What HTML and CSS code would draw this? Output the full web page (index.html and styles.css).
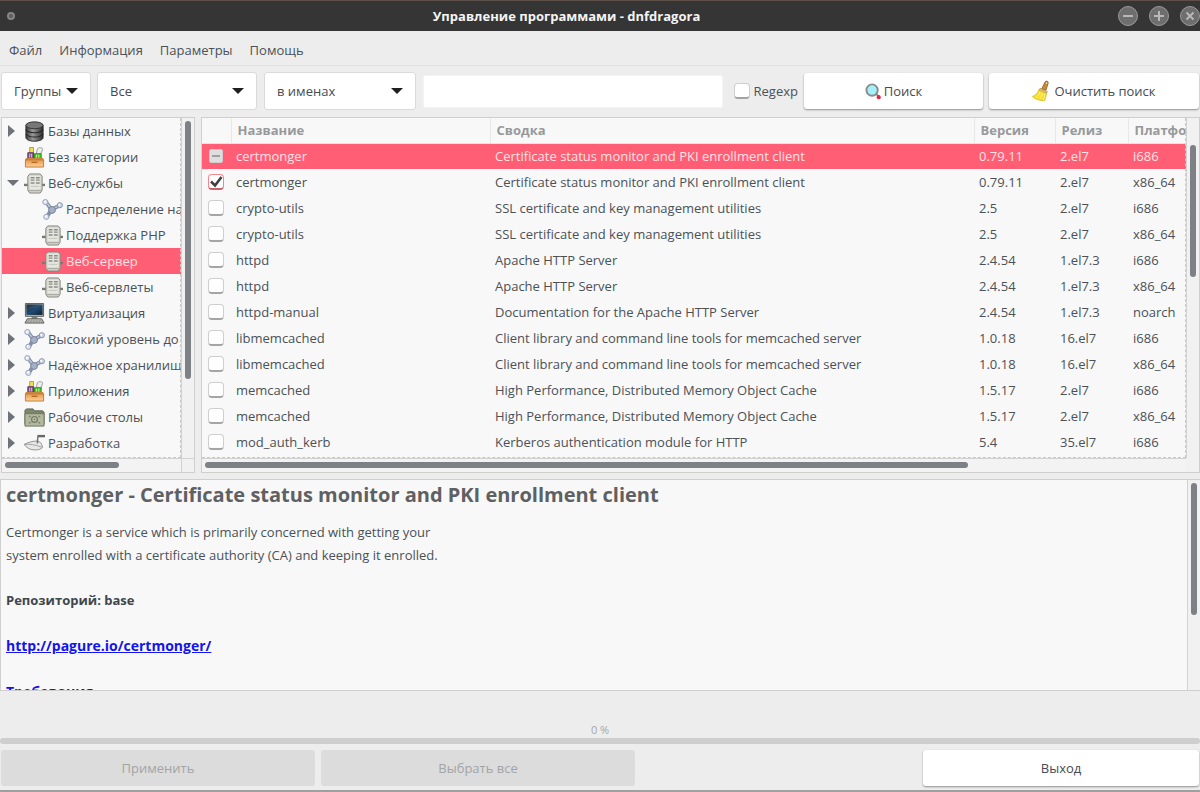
FILE: index.html
```
<!DOCTYPE html>
<html lang="ru">
<head>
<meta charset="utf-8">
<title>Управление программами - dnfdragora</title>
<link rel="stylesheet" href="styles.css">
</head>
<body>
<svg class="defs" aria-hidden="true">
  <defs>
    <linearGradient id="g-dark" x1="0" x2="1"><stop offset="0" stop-color="#3a3a3a"/><stop offset=".4" stop-color="#9a9a9a"/><stop offset="1" stop-color="#2c2c2c"/></linearGradient>
    <linearGradient id="g-screen" x1="0" y1="0" x2="1" y2="1"><stop offset="0" stop-color="#0c1c2c"/><stop offset=".5" stop-color="#1f4c74"/><stop offset="1" stop-color="#10202f"/></linearGradient>
    <linearGradient id="g-box" x1="0" y1="0" x2="0" y2="1"><stop offset="0" stop-color="#e59a50"/><stop offset="1" stop-color="#fdd09a"/></linearGradient>
    <symbol id="i-db" viewBox="0 0 22 22">
      <path d="M2 4.500v13c0 2 4 3.700 9 3.700s9-1.700 9-3.700v-13z" fill="url(#g-dark)" stroke="#2e2e2e"/>
      <ellipse cx="11" cy="4.500" rx="9" ry="3.600" fill="#777" stroke="#333"/>
      <path d="M2 9c1 2.200 4.500 3.300 9 3.300s8-1.100 9-3.300M2 13.500c1 2.200 4.500 3.300 9 3.300s8-1.100 9-3.300" fill="none" stroke="#242424" stroke-width="1.200"/>
    </symbol>
    <symbol id="i-apps" viewBox="0 0 22 22">
      <path d="M6 .5h4v6H6z" fill="#f3df55" stroke="#c09a20"/>
      <path d="M4 6h6v6H4z" fill="#87528e" stroke="#5c3566"/><path d="M6 7v4M8 7v4" stroke="#d9bfe0"/>
      <path d="M14 2c1-2 6-1.500 5.500.5L17 9h-4.500z" fill="#eee" stroke="#999"/>
      <path d="M11 7h7v6h-7z" fill="#43c51c" stroke="#2a9608"/><path d="M13 8v3M15.500 8v3" stroke="#c6f7b3"/>
      <path d="M2 11.500h18l1 3H1z" fill="#c9853f"/>
      <path d="M1.500 13.500h19v7.500h-19z" fill="url(#g-box)" stroke="#c27c36"/>
      <path d="M8 16h6" stroke="#b56c24" stroke-width="1.500"/>
    </symbol>
    <symbol id="i-server" viewBox="0 0 22 22">
      <path d="M0 12.500h22" stroke="#777973" stroke-width="2.500"/>
      <path d="M4 3.500 6 1h11l2 2.500V18l-2 3H6l-2-3z" fill="#d6d7cf" stroke="#82847c"/>
      <path d="M6 3h11v14H6z" fill="#e6e7e1"/>
      <path d="M7 5h4M12.500 5h4M7 7.500h4M12.500 7.500h4M7 10.500h4M12.500 10.500h4" stroke="#8a8c85" stroke-width="1.400"/>
      <path d="M7 14h9" stroke="#c2c3bb"/><path d="M5 18.500h13" stroke="#a2a49b"/>
    </symbol>
    <symbol id="i-net" viewBox="0 0 22 22">
      <path d="M4 3l6 8M10 11l8-4M10 11l-5 8" stroke="#8390a8" stroke-width="4"/>
      <path d="M5 4l5 7M10 11l8-4" stroke="#c4cede" stroke-width="1.400"/>
      <circle cx="10.500" cy="11.500" r="3.600" fill="#a3b0c6" stroke="#77849c"/>
      <circle cx="3.500" cy="3.200" r="2.700" fill="#e0e7f2" stroke="#93a0b8"/>
      <circle cx="18.700" cy="6.500" r="2.700" fill="#cdd7e8" stroke="#8491ab"/>
      <circle cx="4.500" cy="18.700" r="2.700" fill="#dbe4f2" stroke="#93a0b8"/>
      <circle cx="3" cy="3" r="1" fill="#fff"/><circle cx="4" cy="18" r="1" fill="#fff"/><circle cx="18" cy="6" r="1" fill="#fff"/>
    </symbol>
    <symbol id="i-pc" viewBox="0 0 22 22">
      <path d="M1.500.5h19v13.500h-19z" fill="#b5b6b0" stroke="#5b5d58"/>
      <path d="M2.500 1.500h17v11h-17z" fill="url(#g-screen)"/><path d="M3 2h16L3 8z" fill="#fff" opacity=".08"/>
      <path d="M8 14h6v2.500H8z" fill="#777973"/>
      <path d="M3.500 16.500h15l2.500 4.500H1z" fill="#c6c8c0" stroke="#555753"/><path d="M4 18h14M3 19.700h16" stroke="#80827c" stroke-dasharray="2 1"/>
    </symbol>
    <symbol id="i-folder" viewBox="0 0 22 22">
      <path d="M1 18V3.500L2.500 2h7L11 4h8.500L21 5.500V18z" fill="#7f866e" stroke="#5f6651"/>
      <path d="M1 7h20v13H1z" fill="#b3b99f" stroke="#6d745c"/>
      <circle cx="11" cy="13" r="3" fill="#c3c8b2" stroke="#737b61" stroke-width="1.400"/>
      <circle cx="11" cy="13" r="1" fill="#737b61"/>
      <path d="M5 10h2M15 10h2M5 16.500h2M15 16.500h2" stroke="#7d846b" stroke-width="1.500"/>
    </symbol>
    <symbol id="i-dev" viewBox="0 0 22 22">
      <path d="M0 12C4 10 10 8 14.500 8.500c3 .5 4.500 4 5 6.500-3 4-12 3-15 1C2.500 14.500 1 13.500 0 12z" fill="#e6e7e6" stroke="#8e908e"/>
      <path d="M1 12c5-.5 10 0 18 3" fill="none" stroke="#a0a2a0"/>
      <path d="M14.500 4 14 11" stroke="#707270" stroke-width="1.500"/>
      <path d="M14 2h8v2.500h-8z" fill="#666866"/>
    </symbol>
    <symbol id="i-search" viewBox="0 0 18 18">
      <path d="M12 12l3.500 3" stroke="#8b8d8b" stroke-width="2"/>
      <circle cx="7.500" cy="7.500" r="6" fill="#a5f0fb" stroke="#898c8c" stroke-width="2"/>
      <circle cx="14.500" cy="15" r="2.200" fill="#f3203f"/>
    </symbol>
    <symbol id="i-broom" viewBox="0 0 20 24">
      <path d="M11 9.500 14.500 2c1-1.700 3.500-1.300 3.500 1L15.500 11z" fill="#c98b3c" stroke="#94601f"/>
      <circle cx="16.200" cy="3" r=".8" fill="#fff"/>
      <path d="M9 9l8 3.500-1 2.500L7.500 11z" fill="#d9b878" stroke="#a98645" stroke-width=".7"/>
      <path d="M7.500 11c-1.500 4-4 6-7 7 2.500 3 8 5 13.500 4.500 1-2.500 1.800-4.500 2-7.500z" fill="#f5de2c" stroke="#dfc22a"/>
      <path d="M9 13c-1 3-2.500 5-4.500 6.500M11.500 14c-.5 3-1.500 5-3 7M14 15c0 3-.5 5-1.500 7" fill="none" stroke="#fdf39a"/>
    </symbol>
  </defs>
</svg>

<header class="titlebar">
  <span class="dot"></span>
  <h1>Управление программами - dnfdragora</h1>
  <div class="winbtns">
    <button type="button" aria-label="Свернуть"><svg viewBox="0 0 20 20"><circle cx="10" cy="10" r="9.500"/><path d="M5 10h10"/></svg></button>
    <button type="button" aria-label="Развернуть"><svg viewBox="0 0 20 20"><circle cx="10" cy="10" r="9.500"/><path d="M5 10h10M10 5v10"/></svg></button>
    <button type="button" aria-label="Закрыть"><svg viewBox="0 0 20 20"><circle cx="10" cy="10" r="9.500"/><path d="M6.500 6.500l7 7M13.500 6.500l-7 7"/></svg></button>
  </div>
</header>

<nav class="menubar">
  <button type="button">Файл</button>
  <button type="button">Информация</button>
  <button type="button">Параметры</button>
  <button type="button">Помощь</button>
</nav>

<form class="toolbar">
  <span class="combo combo-view"><select aria-label="Вид"><option>Группы</option></select></span>
  <span class="combo combo-filter"><select aria-label="Фильтр"><option>Все</option></select></span>
  <span class="combo combo-scope"><select aria-label="Область поиска"><option>в именах</option></select></span>
  <input class="query" type="text" aria-label="Строка поиска">
  <label class="regexp"><input class="check" type="checkbox">Regexp</label>
  <button class="btn find" type="button"><svg class="ic-search"><use href="#i-search"/></svg>Поиск</button>
  <button class="btn clear" type="button"><svg class="ic-broom"><use href="#i-broom"/></svg>Очистить поиск</button>
</form>

<main>
  <section class="panes">
    <div class="pane tree-pane">
      <div class="view">
        <ul class="tree">
          <li><i class="arrow"></i><svg><use href="#i-db"/></svg><span>Базы данных</span></li>
          <li><i class="arrow none"></i><svg><use href="#i-apps"/></svg><span>Без категории</span></li>
          <li><i class="arrow open"></i><svg><use href="#i-server"/></svg><span>Веб-службы</span></li>
          <li class="child"><svg><use href="#i-net"/></svg><span>Распределение на</span></li>
          <li class="child"><svg><use href="#i-server"/></svg><span>Поддержка PHP</span></li>
          <li class="child selected"><svg><use href="#i-server"/></svg><span>Веб-сервер</span></li>
          <li class="child"><svg><use href="#i-server"/></svg><span>Веб-сервлеты</span></li>
          <li><i class="arrow"></i><svg><use href="#i-pc"/></svg><span>Виртуализация</span></li>
          <li><i class="arrow"></i><svg><use href="#i-net"/></svg><span>Высокий уровень до</span></li>
          <li><i class="arrow"></i><svg><use href="#i-net"/></svg><span>Надёжное хранилищ</span></li>
          <li><i class="arrow"></i><svg><use href="#i-apps"/></svg><span>Приложения</span></li>
          <li><i class="arrow"></i><svg><use href="#i-folder"/></svg><span>Рабочие столы</span></li>
          <li><i class="arrow"></i><svg><use href="#i-dev"/></svg><span>Разработка</span></li>
        </ul>
      </div>
      <div class="vbar"><div class="thumb tree-v"></div></div>
      <div class="hbar"><div class="thumb tree-h"></div></div>
      <div class="corner"></div>
    </div>

    <div class="pane list-pane">
      <div class="view">
        <table class="packages">
          <colgroup><col class="c-check"><col class="c-name"><col><col class="c-version"><col class="c-release"><col class="c-arch"></colgroup>
          <thead><tr><th></th><th>Название</th><th>Сводка</th><th>Версия</th><th>Релиз</th><th>Платформа</th></tr></thead>
          <tbody>
            <tr class="selected"><td><input class="check locked" type="checkbox" disabled aria-label="certmonger i686"></td><td>certmonger</td><td>Certificate status monitor and PKI enrollment client</td><td>0.79.11</td><td>2.el7</td><td>i686</td></tr>
            <tr><td><input class="check" type="checkbox" checked aria-label="certmonger x86_64"></td><td>certmonger</td><td>Certificate status monitor and PKI enrollment client</td><td>0.79.11</td><td>2.el7</td><td>x86_64</td></tr>
            <tr><td><input class="check" type="checkbox" aria-label="crypto-utils i686"></td><td>crypto-utils</td><td>SSL certificate and key management utilities</td><td>2.5</td><td>2.el7</td><td>i686</td></tr>
            <tr><td><input class="check" type="checkbox" aria-label="crypto-utils x86_64"></td><td>crypto-utils</td><td>SSL certificate and key management utilities</td><td>2.5</td><td>2.el7</td><td>x86_64</td></tr>
            <tr><td><input class="check" type="checkbox" aria-label="httpd i686"></td><td>httpd</td><td>Apache HTTP Server</td><td>2.4.54</td><td>1.el7.3</td><td>i686</td></tr>
            <tr><td><input class="check" type="checkbox" aria-label="httpd x86_64"></td><td>httpd</td><td>Apache HTTP Server</td><td>2.4.54</td><td>1.el7.3</td><td>x86_64</td></tr>
            <tr><td><input class="check" type="checkbox" aria-label="httpd-manual noarch"></td><td>httpd-manual</td><td>Documentation for the Apache HTTP Server</td><td>2.4.54</td><td>1.el7.3</td><td>noarch</td></tr>
            <tr><td><input class="check" type="checkbox" aria-label="libmemcached i686"></td><td>libmemcached</td><td>Client library and command line tools for memcached server</td><td>1.0.18</td><td>16.el7</td><td>i686</td></tr>
            <tr><td><input class="check" type="checkbox" aria-label="libmemcached x86_64"></td><td>libmemcached</td><td>Client library and command line tools for memcached server</td><td>1.0.18</td><td>16.el7</td><td>x86_64</td></tr>
            <tr><td><input class="check" type="checkbox" aria-label="memcached i686"></td><td>memcached</td><td>High Performance, Distributed Memory Object Cache</td><td>1.5.17</td><td>2.el7</td><td>i686</td></tr>
            <tr><td><input class="check" type="checkbox" aria-label="memcached x86_64"></td><td>memcached</td><td>High Performance, Distributed Memory Object Cache</td><td>1.5.17</td><td>2.el7</td><td>x86_64</td></tr>
            <tr><td><input class="check" type="checkbox" aria-label="mod_auth_kerb i686"></td><td>mod_auth_kerb</td><td>Kerberos authentication module for HTTP</td><td>5.4</td><td>35.el7</td><td>i686</td></tr>
          </tbody>
        </table>
      </div>
      <div class="vbar"><div class="thumb list-v"></div></div>
      <div class="hbar"><div class="thumb list-h"></div></div>
      <div class="corner"></div>
    </div>
  </section>

  <section class="details">
    <article>
      <h2>certmonger - Certificate status monitor and PKI enrollment client</h2>
      <p>Certmonger is a service which is primarily concerned with getting your<br>system enrolled with a certificate authority (CA) and keeping it enrolled.</p>
      <p><b>Репозиторий: base</b></p>
      <p><a href="#url">http://pagure.io/certmonger/</a></p>
      <p><a href="#requires">Требования</a></p>
    </article>
    <div class="vbar"><div class="thumb details-v"></div></div>
  </section>
</main>

<footer>
  <label class="status" for="progress">0 %</label>
  <progress id="progress" value="0" max="100"></progress>
  <div class="actions">
    <button class="btn" type="button" disabled>Применить</button>
    <button class="btn" type="button" disabled>Выбрать все</button>
    <span></span>
    <button class="btn" type="button">Выход</button>
  </div>
</footer>
</body>
</html>
```
FILE: styles.css
```
* { box-sizing: border-box; }

body {
  margin: 0;
  min-height: 100vh;
  display: flex;
  flex-direction: column;
  background: #ededed;
  color: #4b5157;
  font: 13px/18px "Open Sans", "Noto Sans", sans-serif;
  border-bottom: 2px solid #a0a0a0;
}

button, input, select { font: inherit; color: inherit; }
.defs { position: absolute; width: 0; height: 0; }

/* Title bar */
.titlebar {
  display: flex;
  align-items: center;
  height: 31px;
  padding-left: 7px;
  background: #353535;
  border-top: 1px solid #5b4f47;
  color: #f4f4f4;
}
.titlebar h1 { flex: 1; margin: 0; font-size: 13px; line-height: 18px; text-align: center; }
.dot { width: 8px; height: 8px; border: 2px solid #858585; border-radius: 50%; background: #5c5c5c; }
.winbtns { display: flex; gap: 11px; }
.winbtns button { width: 20px; height: 20px; padding: 0; border: 0; background: none; }
.winbtns svg { display: block; width: 20px; height: 20px; fill: #6e6e6e; stroke: #9a9a9a; }
.winbtns path { stroke: #b8b8b8; stroke-width: 2; }

/* Menu */
.menubar {
  display: flex;
  gap: 17px;
  height: 35px;
  padding: 4px 9px 0;
  border-bottom: 1px solid #e0e0e0;
}
.menubar button { padding: 0; border: 0; background: none; }

/* Toolbar */
.toolbar {
  display: flex;
  align-items: center;
  gap: 6px;
  padding: 6px 0 7px 1px;
}
.combo { position: relative; flex: none; }
.combo-view { width: 90px; }
.combo-filter { width: 160px; }
.combo-scope { width: 152px; margin: 0 1px; }
.combo::after {
  content: "";
  position: absolute;
  right: 13px;
  top: 16px;
  border: 6px solid transparent;
  border-top-color: #1f1f1f;
  border-bottom: 0;
  pointer-events: none;
}
.combo select {
  appearance: none;
  display: block;
  width: 100%;
  height: 38px;
  padding: 0 12px;
  border: 1px solid #dadada;
  border-radius: 3px;
  background: #fff;
  color: #454b50;
}
.query { flex: 1; min-width: 0; height: 33px; padding: 0 8px; border: 1px solid #f4f4f4; border-radius: 2px; background: #fff; }
.regexp { display: flex; align-items: center; gap: 4px; margin-left: 5px; }
.btn {
  display: flex;
  align-items: center;
  justify-content: center;
  gap: 2px;
  height: 36px;
  padding: 0 8px;
  border: 0;
  border-radius: 3px;
  background: #fff;
  color: #454b50;
  box-shadow: 0 1px 2px #0006;
}
.btn:disabled { background: #dcdcdc; color: #a2a4a6; box-shadow: none; }
.find { width: 179px; }
.clear { width: 210px; gap: 4px; margin-right: 1px; }
.ic-search { width: 17px; height: 17px; }
.ic-broom { width: 18px; height: 22px; }

/* Check boxes */
.check {
  appearance: none;
  flex: none;
  display: block;
  width: 16px;
  height: 16px;
  margin: 0;
  border: 1px solid #cfcfcf;
  border-bottom: 2px solid #a4a4a4;
  border-radius: 4px;
  background: #fff center / 14px 14px no-repeat;
}
.check:checked {
  border-color: #f5848f;
  border-bottom-color: #c9606c;
  background-image: url("data:image/svg+xml,%3Csvg xmlns='http://www.w3.org/2000/svg' viewBox='0 0 14 14'%3E%3Cpath d='M2 6.500 6 10.500 12.500 2' fill='none' stroke='%23404040' stroke-width='2.600'/%3E%3C/svg%3E");
}
.check.locked {
  width: 14px;
  height: 14px;
  margin-left: 1px;
  border: 1px solid #d0cccc;
  border-radius: 2px;
  background: linear-gradient(#a0a0a0, #a0a0a0) center / 8px 2px no-repeat, #dedede;
}

/* Scrolled panes */
main { flex: 1; display: flex; flex-direction: column; gap: 6px; }
.panes { display: grid; grid-template-columns: 194px 1fr; gap: 6px; padding-left: 1px; }
.pane {
  display: grid;
  grid-template-columns: 1fr 13px;
  grid-template-rows: 1fr 14px;
  min-width: 0;
  height: 356px;
  border: 1px solid #cfcfcf;
  background: #f8f8f8;
}
.view { position: relative; min-width: 0; overflow: hidden; }
.view::after {
  content: "";
  position: absolute;
  inset: 0;
  border: 0 dashed #c8c8c8;
  border-width: 0 1px 1px 0;
  pointer-events: none;
}
.vbar { padding: 3px 3px 0; border-left: 1px solid #d2d2d2; background: #f1f1f1; }
.hbar { padding: 3px; border-top: 1px solid #d2d2d2; background: #f3f3f3; }
.corner { border: solid #d2d2d2; border-width: 1px 0 0 1px; background: #f1f1f1; }
.thumb { border-radius: 3px; background: #7d8186; }
.vbar .thumb { width: 6px; }
.hbar .thumb { height: 6px; }
.tree-v { height: 258px; }
.tree-h { width: 66%; }
.list-v { height: 132px; }
.list-h { width: 78%; }
.list-pane .vbar { padding-top: 27px; }
.list-pane .corner { border: 0; }

/* Group tree */
.tree { margin: 0; padding: 0; list-style: none; }
.tree li { display: flex; align-items: center; gap: 3px; height: 26px; padding-left: 6px; white-space: nowrap; }
.tree li svg { flex: none; width: 21px; height: 21px; }
.tree .child { padding-left: 40px; }
.tree .selected, .packages .selected { background: #ff5e75; color: #ffe3e6; }
.arrow { flex: none; width: 13px; border: solid transparent; border-width: 6px 0 6px 7px; border-left-color: #6e7379; }
.arrow.none { visibility: hidden; }
.arrow.open {
  width: 12px;
  margin: 0 2px 0 -1px;
  border: 6px solid transparent;
  border-top-color: #6e7379;
  border-bottom: 0;
}

/* Package list */
.packages { width: 100%; table-layout: fixed; border-collapse: collapse; }
.packages th {
  height: 25px;
  padding: 0 6px;
  border-left: 1px solid #e8e8e8;
  border-bottom: 1px solid #e3e3e3;
  color: #97999b;
  text-align: left;
  overflow: hidden;
}
.packages th:first-child { border-left: 0; }
.packages td { height: 26px; padding: 0 5px; overflow: hidden; white-space: nowrap; }
.packages td:first-child { padding-left: 6px; }
.c-check { width: 29px; }
.c-name { width: 259px; }
.c-version { width: 81px; }
.c-release { width: 73px; }
.c-arch { width: 58px; }

/* Package details */
.details {
  display: grid;
  grid-template-columns: 1fr 13px;
  height: 212px;
  border: 1px solid #cfcfcf;
  border-right: 0;
  background: #f8f8f8;
}
.details article { overflow: hidden; padding: 3px 5px 0; line-height: 23px; }
.details h2 { margin: 0 0 14px; font-size: 20px; line-height: 24px; color: #5e6062; }
.details p { margin: 0 0 22px; }
.details b { color: #3f464c; }
.details a { color: #1414ee; font-size: 14px; font-weight: bold; }
.details-v { height: 132px; }

/* Progress and actions */
footer { display: flex; flex-direction: column; }
.status { padding: 30px 0 0; font-size: 11px; line-height: 16px; text-align: center; color: #a6a8aa; }
progress { appearance: none; display: block; width: 100%; height: 6px; border: 0; border-radius: 3px; background: #cecece; overflow: hidden; }
progress::-webkit-progress-bar { background: #cecece; }
.actions { display: grid; grid-template-columns: repeat(2, 314fr) 276fr 276fr; gap: 6px; padding: 6px 1px 4px; }
```
